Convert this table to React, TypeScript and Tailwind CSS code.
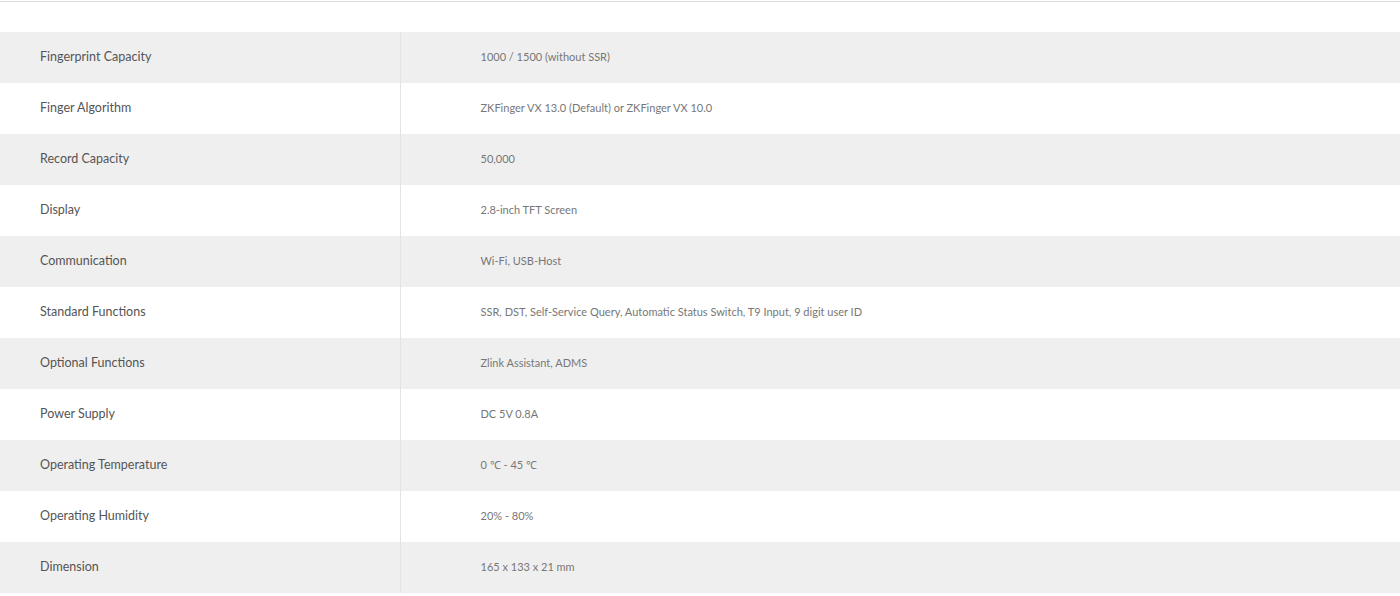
import React from 'react';

const specs: [string, string][] = [
    ['Fingerprint Capacity', '1000 / 1500 (without SSR)'],
    ['Finger Algorithm', 'ZKFinger VX 13.0 (Default) or ZKFinger VX 10.0'],
    ['Record Capacity', '50,000'],
    ['Display', '2.8-inch TFT Screen'],
    ['Communication', 'Wi-Fi, USB-Host'],
    ['Standard Functions', 'SSR, DST, Self-Service Query, Automatic Status Switch, T9 Input, 9 digit user ID'],
    ['Optional Functions', 'Zlink Assistant, ADMS'],
    ['Power Supply', 'DC 5V 0.8A'],
    ['Operating Temperature', '0 ℃ - 45 ℃'],
    ['Operating Humidity', '20% - 80%'],
    ['Dimension', '165 x 133 x 21 mm'],
];

const App = () => {
    return (
        <div className="w-[1400px] h-[596px] bg-white font-['Lato',sans-serif] overflow-hidden">
            <div className="h-px mt-px bg-[#dcdcdc]" />
            <table className="w-full mt-[30px] border-collapse">
                <tbody>
                    {specs.map(([label, value], i) => (
                        <tr key={label} className={i % 2 === 0 ? 'bg-[#efefef]' : 'bg-white'}>
                            <td className="w-[400px] h-[51px] pl-10 text-[12.5px] text-[#555] border-r border-[#e3e3e3]">
                                {label}
                            </td>
                            <td className="h-[51px] pl-20 text-[11px] text-[#777]">
                                {value}
                            </td>
                        </tr>
                    ))}
                </tbody>
            </table>
        </div>
    )
}

export default App;
